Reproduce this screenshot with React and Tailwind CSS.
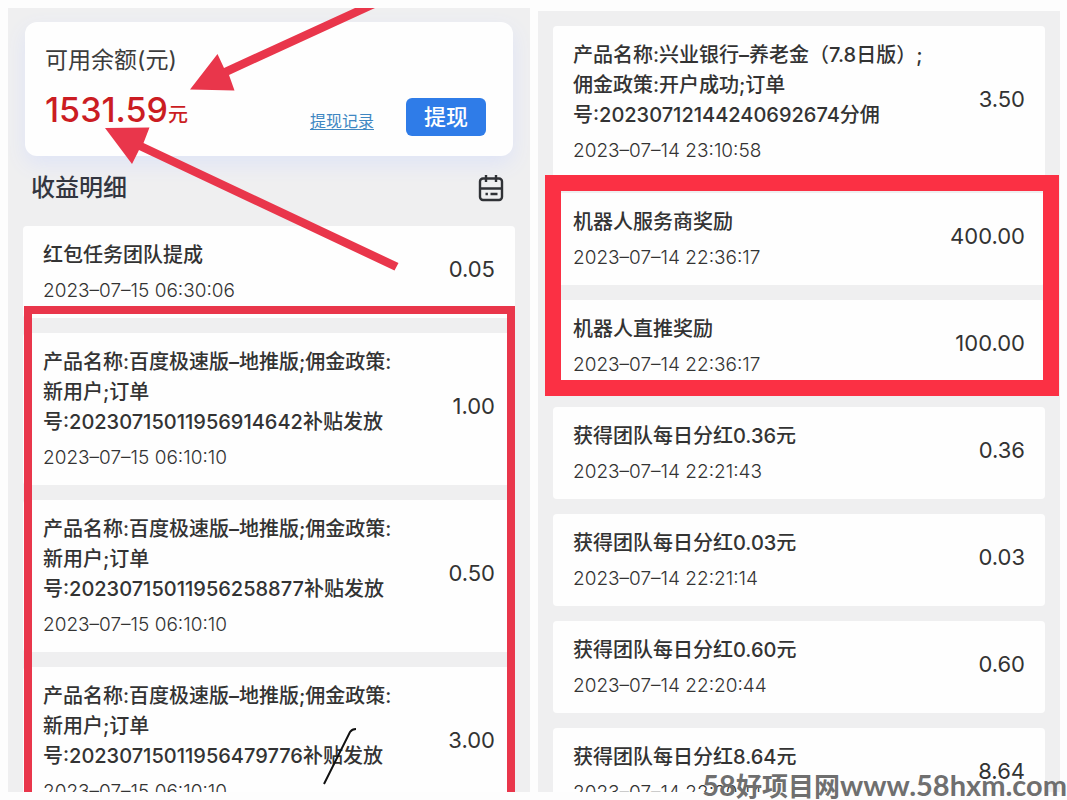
import React from 'react';

const featured = [
  { id: 1, lines: ['红包任务团队提成'], time: '2023–07–15 06:30:06', amount: '0.05' },
];

const subsidies = [
  { id: 2, lines: ['产品名称:百度极速版–地推版;佣金政策:', '新用户;订单', '号:20230715011956914642补贴发放'], time: '2023–07–15 06:10:10', amount: '1.00' },
  { id: 3, lines: ['产品名称:百度极速版–地推版;佣金政策:', '新用户;订单', '号:20230715011956258877补贴发放'], time: '2023–07–15 06:10:10', amount: '0.50' },
  { id: 4, lines: ['产品名称:百度极速版–地推版;佣金政策:', '新用户;订单', '号:20230715011956479776补贴发放'], time: '2023–07–15 06:10:10', amount: '3.00' },
];

const bank = [
  { id: 5, lines: ['产品名称:兴业银行–养老金（7.8日版）;', '佣金政策:开户成功;订单', '号:20230712144240692674分佣'], time: '2023–07–14 23:10:58', amount: '3.50' },
];

const robots = [
  { id: 6, lines: ['机器人服务商奖励'], time: '2023–07–14 22:36:17', amount: '400.00' },
  { id: 7, lines: ['机器人直推奖励'], time: '2023–07–14 22:36:17', amount: '100.00' },
];

const dividends = [
  { id: 8, lines: ['获得团队每日分红0.36元'], time: '2023–07–14 22:21:43', amount: '0.36' },
  { id: 9, lines: ['获得团队每日分红0.03元'], time: '2023–07–14 22:21:14', amount: '0.03' },
  { id: 10, lines: ['获得团队每日分红0.60元'], time: '2023–07–14 22:20:44', amount: '0.60' },
  { id: 11, lines: ['获得团队每日分红8.64元'], time: '2023–07–14 22:20:14', amount: '8.64' },
];

function CalendarIcon() {
  return (
    <svg className="h-7 w-7" viewBox="0 0 28 28" fill="none" stroke="#303236" strokeWidth="2.4">
      <rect x="3" y="4.500" width="22" height="21.500" rx="3" />
      <path d="M3 14.5h22M9 1v7M19 1v7" />
      <path d="M8.5 20h2.4M13.5 20h7" />
    </svg>
  );
}

function Record({ record }) {
  return (
    <li className="flex items-center justify-between rounded-sm bg-[#fefefe] px-5 pt-3.5 pb-3">
      <div className="min-w-0">
        <h3 className="text-xl leading-[30px] font-medium whitespace-nowrap text-[#333]">
          {record.lines.map((line) => (
            <span key={line} className="block">{line}</span>
          ))}
        </h3>
        <time className="mt-1.5 block text-[19px] leading-[30px] font-light text-[#333]">{record.time}</time>
      </div>
      <span className="pb-2 text-[22px] leading-[30px] text-[#333]">{record.amount}</span>
    </li>
  );
}

function RecordList({ records, children }) {
  return (
    <div className="relative">
      <ul className="flex flex-col gap-[15px]">
        {records.map((record) => (
          <Record key={record.id} record={record} />
        ))}
      </ul>
      {children}
    </div>
  );
}

function Balance() {
  return (
    <section className="mx-0.5 rounded-xl bg-[#fefefe] px-5 pt-5 pb-5 shadow-[0_8px_20px_#dfe4f6]">
      <h2 className="text-[23px] leading-9 font-normal text-[#3c3c3c]">可用余额(元)</h2>
      <div className="mt-3 flex items-start justify-between">
        <p className="text-[34px] leading-10 font-medium text-[#cb1c22]">
          1531.59<span className="text-xl">元</span>
        </p>
        <div className="mt-2 flex items-center gap-8 pr-[7px]">
          <a href="#records" className="mt-2 text-base leading-6 text-[#3f87c2] underline underline-offset-2">提现记录</a>
          <button type="button" className="rounded-md bg-[#2f7ce8] px-[18px] text-[22px] leading-[38px] font-medium text-white">提现</button>
        </div>
      </div>
    </section>
  );
}

function Arrows() {
  return (
    <svg className="pointer-events-none absolute top-0 left-0 h-[270px] w-[400px]" viewBox="8 8 400 270" fill="#e9364b">
      <path d="M355 8H375L229 75L234.5 90.5L190 89.5L217.5 54L224 68Z" />
      <path d="M105 128L149.500 127.500L143.500 143L398.500 263L394.500 270.500L139 150L132 164Z" />
    </svg>
  );
}

function App() {
  return (
    <div className="relative h-screen overflow-hidden bg-[#fdfdfd] py-2 pr-[7px] pl-2 font-['Inter','Noto_Sans_CJK_SC',sans-serif]">
      <div className="grid h-full grid-cols-2 gap-2">
        <main className="relative overflow-hidden bg-[#efeff0] px-[15px] pt-3.5">
          <Balance />
          <div className="mt-4 mb-[22px] flex items-center justify-between pr-2.5 pl-2">
            <h2 className="text-2xl leading-8 font-medium text-[#333640]">收益明细</h2>
            <button type="button" aria-label="日历">
              <CalendarIcon />
            </button>
          </div>
          <div id="records" className="flex flex-col gap-[15px]">
            <RecordList records={featured} />
            <RecordList records={subsidies}>
              <div className="pointer-events-none absolute -top-[27px] right-0 -bottom-5 left-px border-8 border-[#e9364b]" />
              <svg className="pointer-events-none absolute bottom-8 left-[300px] h-15 w-10" viewBox="0 0 40 60" fill="none" stroke="#111" strokeWidth="2">
                <path d="M1 57L27 5Q29 2 33 2" />
              </svg>
            </RecordList>
          </div>
          <Arrows />
        </main>
        <section className="mt-[3px] flex flex-col gap-[15px] overflow-hidden bg-[#efeff0] px-[15px] pt-[15px]">
          <RecordList records={bank} />
          <RecordList records={robots}>
            <div className="pointer-events-none absolute -top-[18px] -right-[14px] -bottom-1 -left-2 border-16 border-[#fb3044]" />
          </RecordList>
          <RecordList records={dividends} />
        </section>
      </div>
      <p className="absolute right-0 -bottom-1 font-['Lato','Noto_Sans_CJK_SC',sans-serif] text-[29px] leading-9 font-bold whitespace-nowrap text-[#6f6f6f]">
        58<span className="text-[26px]">好项目网</span>www.58hxm.com
      </p>
    </div>
  );
}

export default App;
